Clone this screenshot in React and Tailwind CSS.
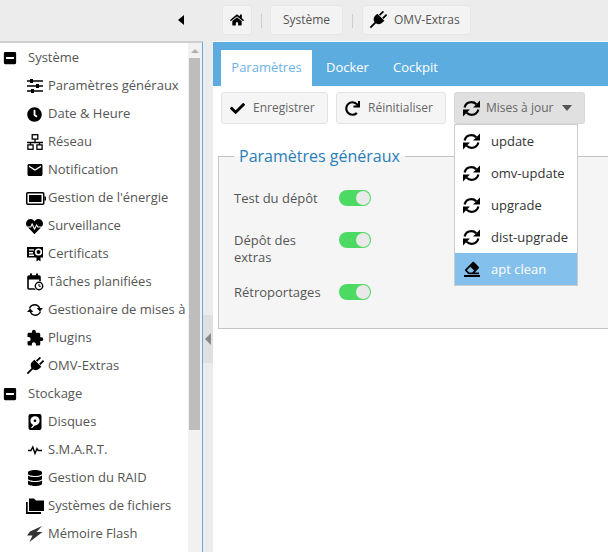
import { FaHome, FaCheck, FaRedo, FaEraser, FaMinusSquare, FaClock, FaHeartbeat, FaDatabase } from 'react-icons/fa';
import { MdEmail, MdExtension } from 'react-icons/md';

function SlidersIcon() {
  return (
    <svg width="16" height="16" viewBox="0 0 16 16" className="ml-px">
      <path d="M0 3h16M0 8h16M0 13h16" stroke="#000" strokeWidth="1.3" />
      <path d="M3 1h3v4H3zM9 6h3v4H9zM4 11h3v4H4z" fill="#000" />
    </svg>
  );
}

function NetworkIcon() {
  return (
    <svg width="16" height="16" viewBox="0 0 16 16" className="ml-px" fill="none" stroke="#000" strokeWidth="1.3">
      <rect x="5.2" y="0.7" width="5.6" height="4.4" />
      <path d="M8 5v3M0 8.5h16M3.5 8v3M12.5 8v3" />
      <rect x="0.9" y="10.9" width="5.2" height="4.4" />
      <rect x="9.9" y="10.9" width="5.2" height="4.4" />
    </svg>
  );
}

function BatteryIcon() {
  return (
    <svg width="20" height="13" viewBox="0 0 20 13">
      <rect x="0.75" y="0.75" width="17" height="11.5" rx="1" fill="none" stroke="#000" strokeWidth="1.5" />
      <rect x="3" y="3" width="12.5" height="7" fill="#000" />
      <rect x="18.5" y="4.5" width="1.5" height="4" fill="#000" />
    </svg>
  );
}

function CertificateIcon() {
  return (
    <svg width="16" height="16" viewBox="0 0 16 16" className="ml-px">
      <rect x="0" y="1" width="16" height="10.5" fill="#000" />
      <path d="M2 3.2h5v1.4H2zM2 6h4v1.4H2zM2 8.6h5V10H2z" fill="#fff" />
      <circle cx="11.5" cy="6" r="3.6" fill="#fff" />
      <circle cx="11.5" cy="6" r="2" fill="#000" />
      <path d="M9.5 10h4v5.5l-2-1.4-2 1.4z" fill="#000" />
    </svg>
  );
}

function CalendarClockIcon() {
  return (
    <svg width="17" height="18" viewBox="0 0 17 18" className="ml-px">
      <rect x="1" y="3" width="12" height="13" rx="1" fill="none" stroke="#000" strokeWidth="1.6" />
      <path d="M1 3h12v3.5H1zM3 0.5h2V4H3zM9 0.5h2V4H9z" fill="#000" />
      <circle cx="12" cy="13" r="5" fill="#fff" />
      <circle cx="12" cy="13" r="3.7" fill="none" stroke="#000" strokeWidth="1.4" />
      <path d="M12 11v2.3h1.8" fill="none" stroke="#000" strokeWidth="1" />
    </svg>
  );
}

function UpdateIcon() {
  return (
    <svg width="16" height="16" viewBox="0 0 16 16" className="ml-px">
      <path d="M2.5 6.5C3.5 4 5.8 2.8 8 2.8c2.2 0 3.6 1.2 4.6 3.2" fill="none" stroke="#000" strokeWidth="1.4" />
      <path d="M9.7 6H16l-3.2 3.5z" fill="#000" />
      <g transform="rotate(180 8 8)">
        <path d="M2.5 6.5C3.5 4 5.8 2.8 8 2.8c2.2 0 3.6 1.2 4.6 3.2" fill="none" stroke="#000" strokeWidth="1.4" />
        <path d="M9.7 6H16l-3.2 3.5z" fill="#000" />
      </g>
    </svg>
  );
}

function PlugIcon({ size = 16 }) {
  return (
    <svg width={size} height={size} viewBox="-2 -2 20 20" className="shrink-0">
      <g transform="rotate(45 8 8)" fill="#000">
        <path d="M4.5 -3h2v6h-2zM9.5 -3h2v6h-2z" />
        <path d="M2.5 3.5h11V7a5.5 5.5 0 0 1 -11 0z" />
        <path d="M7 11h2v9H7z" />
      </g>
    </svg>
  );
}

function DiskIcon() {
  return (
    <svg width="16" height="16" viewBox="0 0 16 16" className="ml-px">
      <rect x="1.5" y="0" width="13" height="16" rx="2" fill="#000" />
      <circle cx="8" cy="6.8" r="4.6" fill="#fff" />
      <circle cx="8" cy="6.8" r="1.3" fill="#000" />
      <path d="M4 13.5l3-3.2 1 1-3 3z" fill="#fff" />
    </svg>
  );
}

function PulseIcon() {
  return (
    <svg width="16" height="16" viewBox="0 0 16 16" className="ml-px">
      <path d="M1 8.5h3l1.800-3.500 2.200 6.500 2-5 1.200 2h3.800" fill="none" stroke="#000" strokeWidth="1.4" />
    </svg>
  );
}

function FoldersIcon() {
  return (
    <svg width="18" height="16" viewBox="0 0 18 16">
      <path d="M0 4h1.700v10H15v2H0z" fill="#000" />
      <path d="M3 0.500h5l2 2h8V13H3z" fill="#000" />
    </svg>
  );
}

function BoltIcon() {
  return (
    <svg width="16" height="16" viewBox="0 0 16 16" className="ml-px">
      <path d="M15 0L3 5.500 0 9.500h5.500L2.500 16 15.500 6H9.500z" fill="#333" />
    </svg>
  );
}

function RefreshIcon() {
  return (
    <svg width="17" height="17" viewBox="0 0 16 16" className="shrink-0">
      <path d="M1.500 7C2.300 3.800 5 2 8 2c1.900 0 3.300 0.700 4.500 2" fill="none" stroke="#000" strokeWidth="2.100" />
      <path d="M16 0.500V7H9.500z" fill="#000" />
      <g transform="rotate(180 8 8)">
        <path d="M1.500 7C2.300 3.800 5 2 8 2c1.900 0 3.300 0.700 4.500 2" fill="none" stroke="#000" strokeWidth="2.100" />
        <path d="M16 0.500V7H9.500z" fill="#000" />
      </g>
    </svg>
  );
}

const sections = [
  {
    title: 'Système',
    items: [
      ['Paramètres généraux', <SlidersIcon />],
      ['Date & Heure', <FaClock className="ml-px text-[15px] text-black" />],
      ['Réseau', <NetworkIcon />],
      ['Notification', <MdEmail className="text-[18px] text-black" />],
      ["Gestion de l'énergie", <BatteryIcon />],
      ['Surveillance', <FaHeartbeat className="text-[17px] text-black" />],
      ['Certificats', <CertificateIcon />],
      ['Tâches planifiées', <CalendarClockIcon />],
      ['Gestionaire de mises à', <UpdateIcon />],
      ['Plugins', <MdExtension className="text-[18px] text-black" />],
      ['OMV-Extras', <PlugIcon size={18} />],
    ],
  },
  {
    title: 'Stockage',
    items: [
      ['Disques', <DiskIcon />],
      ['S.M.A.R.T.', <PulseIcon />],
      ['Gestion du RAID', <FaDatabase className="ml-px text-[16px] text-black" />],
      ['Systèmes de fichiers', <FoldersIcon />],
      ['Mémoire Flash', <BoltIcon />],
    ],
  },
];

const menuItems = ['update', 'omv-update', 'upgrade', 'dist-upgrade'];

function Toggle() {
  return (
    <div className="w-8 h-4 rounded-full bg-[#4cd964] flex items-center justify-end p-px">
      <div className="w-[14px] h-[14px] rounded-full bg-[#e9e9e9]" />
    </div>
  );
}

export default function App() {
  return (
    <div className="w-[608px] h-[552px] overflow-hidden flex flex-col bg-white text-[13px] text-[#555]" style={{ fontFamily: '"Open Sans", sans-serif' }}>
      <header className="h-[41px] shrink-0 flex items-center pl-[178px] bg-[#ececec] text-[12px]">
        <div className="w-[44px] shrink-0">
          <div className="w-0 h-0 mb-[2px] border-y-[5px] border-y-transparent border-r-[6px] border-r-black" />
        </div>
        <div className="h-[30px] w-[30px] mb-px flex items-center justify-center bg-[#f3f3f3] border border-[#e6e6e6] rounded-[3px]">
          <FaHome className="text-[14px] text-black" />
        </div>
        <div className="w-px h-[14px] bg-[#ccc] ml-[9px] mr-2" />
        <div className="h-[30px] w-[73px] mb-px flex items-center justify-center bg-[#f3f3f3] border border-[#e6e6e6] rounded-[3px]">
          Système
        </div>
        <div className="w-px h-[14px] bg-[#ccc] mx-[9px]" />
        <div className="h-[30px] w-[109px] mb-px flex items-center gap-[7px] pl-[6px] bg-[#f3f3f3] border border-[#e6e6e6] rounded-[3px]">
          <PlugIcon size={18} />
          OMV-Extras
        </div>
      </header>

      <div className="flex-1 min-h-0 flex">
        <aside className="w-[203px] shrink-0 flex border-t-2 border-t-[#cfcfcf] border-r border-r-[#5dacdf] overflow-hidden">
          <nav className="w-[188px] shrink-0 overflow-hidden pt-px">
            {sections.map((section) => (
              <div key={section.title}>
                <div className="h-7 flex items-center pl-[3px] whitespace-nowrap">
                  <FaMinusSquare className="text-[14px] text-black" />
                  <span className="ml-[11px]">{section.title}</span>
                </div>
                {section.items.map(([label, icon]) => (
                  <div key={label} className="h-7 flex items-center pl-[26px] whitespace-nowrap">
                    <span className="w-[22px] shrink-0 flex items-center">{icon}</span>
                    <span>{label}</span>
                  </div>
                ))}
              </div>
            ))}
          </nav>
          <div className="w-[14px] shrink-0 flex flex-col bg-[#f1f1f1]">
            <div className="h-[15px] flex items-center justify-center">
              <div className="w-0 h-0 border-x-4 border-x-transparent border-b-4 border-b-[#b0b0b0]" />
            </div>
            <div className="h-[372px] w-[11px] ml-px bg-[#bdbdbd]" />
          </div>
        </aside>

        <div className="w-[10px] shrink-0 pt-[274px] bg-[#ececec]">
          <div className="h-12 flex items-center justify-center bg-[#e0e0e0]">
            <div className="w-0 h-0 border-y-[6px] border-y-transparent border-r-[6px] border-r-[#888]" />
          </div>
        </div>

        <main className="flex-1 min-w-0 flex flex-col pt-px bg-white">
          <div className="h-[44px] shrink-0 flex items-end pl-2 bg-[#5dacdf] text-white">
            <div className="h-9 w-[91px] flex items-center justify-center bg-white text-[#6db3e6]">Paramètres</div>
            <div className="h-9 ml-[14px] flex items-center">Docker</div>
            <div className="h-9 ml-6 flex items-center">Cockpit</div>
          </div>

          <div className="relative h-[38px] shrink-0 flex items-end pl-2 gap-2 text-[12px] text-[#666]">
            <div className="h-8 w-[107px] flex items-center pl-[8px] gap-2 bg-[#f5f5f5] border border-[#e3e3e3] rounded-[3px]">
              <FaCheck className="text-[15px] text-black" />
              <span>Enregistrer</span>
            </div>
            <div className="h-8 w-[110px] flex items-center pl-2 gap-[8px] bg-[#f5f5f5] border border-[#e3e3e3] rounded-[3px]">
              <FaRedo className="text-[15px] text-black" />
              <span>Réinitialiser</span>
            </div>
            <div className="h-8 w-[131px] flex items-center pl-2 bg-[#e0e0e0] border border-[#d8d8d8] rounded-[3px]">
              <RefreshIcon />
              <span className="ml-[6px]">Mises à jour</span>
              <div className="ml-[9px] w-0 h-0 border-x-[5px] border-x-transparent border-t-[6px] border-t-[#555]" />
            </div>

            <div className="absolute left-[241px] top-[38px] z-10 w-[124px] bg-white border border-[#ccc] text-[13px] text-[#333]">
              {menuItems.map((item) => (
                <div key={item} className="h-8 flex items-center pl-2 whitespace-nowrap">
                  <RefreshIcon />
                  <span className="ml-[11px] mt-[2px]">{item}</span>
                </div>
              ))}
              <div className="h-8 flex items-center pl-2 bg-[#83c1ec] text-white">
                <span className="w-[17px] flex flex-col items-center">
                  <FaEraser className="text-[14px] text-black" />
                  <span className="w-4 h-[2px] bg-black" />
                </span>
                <span className="ml-[11px] mt-[2px]">apt clean</span>
              </div>
            </div>
          </div>

          <fieldset className="mt-[21px] ml-[5px] -mr-1 h-[184px] pl-[15px] bg-[#f5f5f5] border border-[#c4c4c4]">
            <legend className="px-[5px] text-[16px] leading-[22px] text-[#2a80b9]">Paramètres généraux</legend>
            <div className="mt-[10px]">
              <div className="h-[42px] flex items-center">
                <div className="w-[105px] mt-[2px]">Test du dépôt</div>
                <Toggle />
              </div>
              <div className="h-[52px] flex items-start pt-[13px]">
                <div className="w-[105px] pr-4 leading-[17px]">Dépôt des extras</div>
                <Toggle />
              </div>
              <div className="h-[42px] flex items-center">
                <div className="w-[105px] mt-[2px]">Rétroportages</div>
                <Toggle />
              </div>
            </div>
          </fieldset>
        </main>
      </div>
    </div>
  );
}
